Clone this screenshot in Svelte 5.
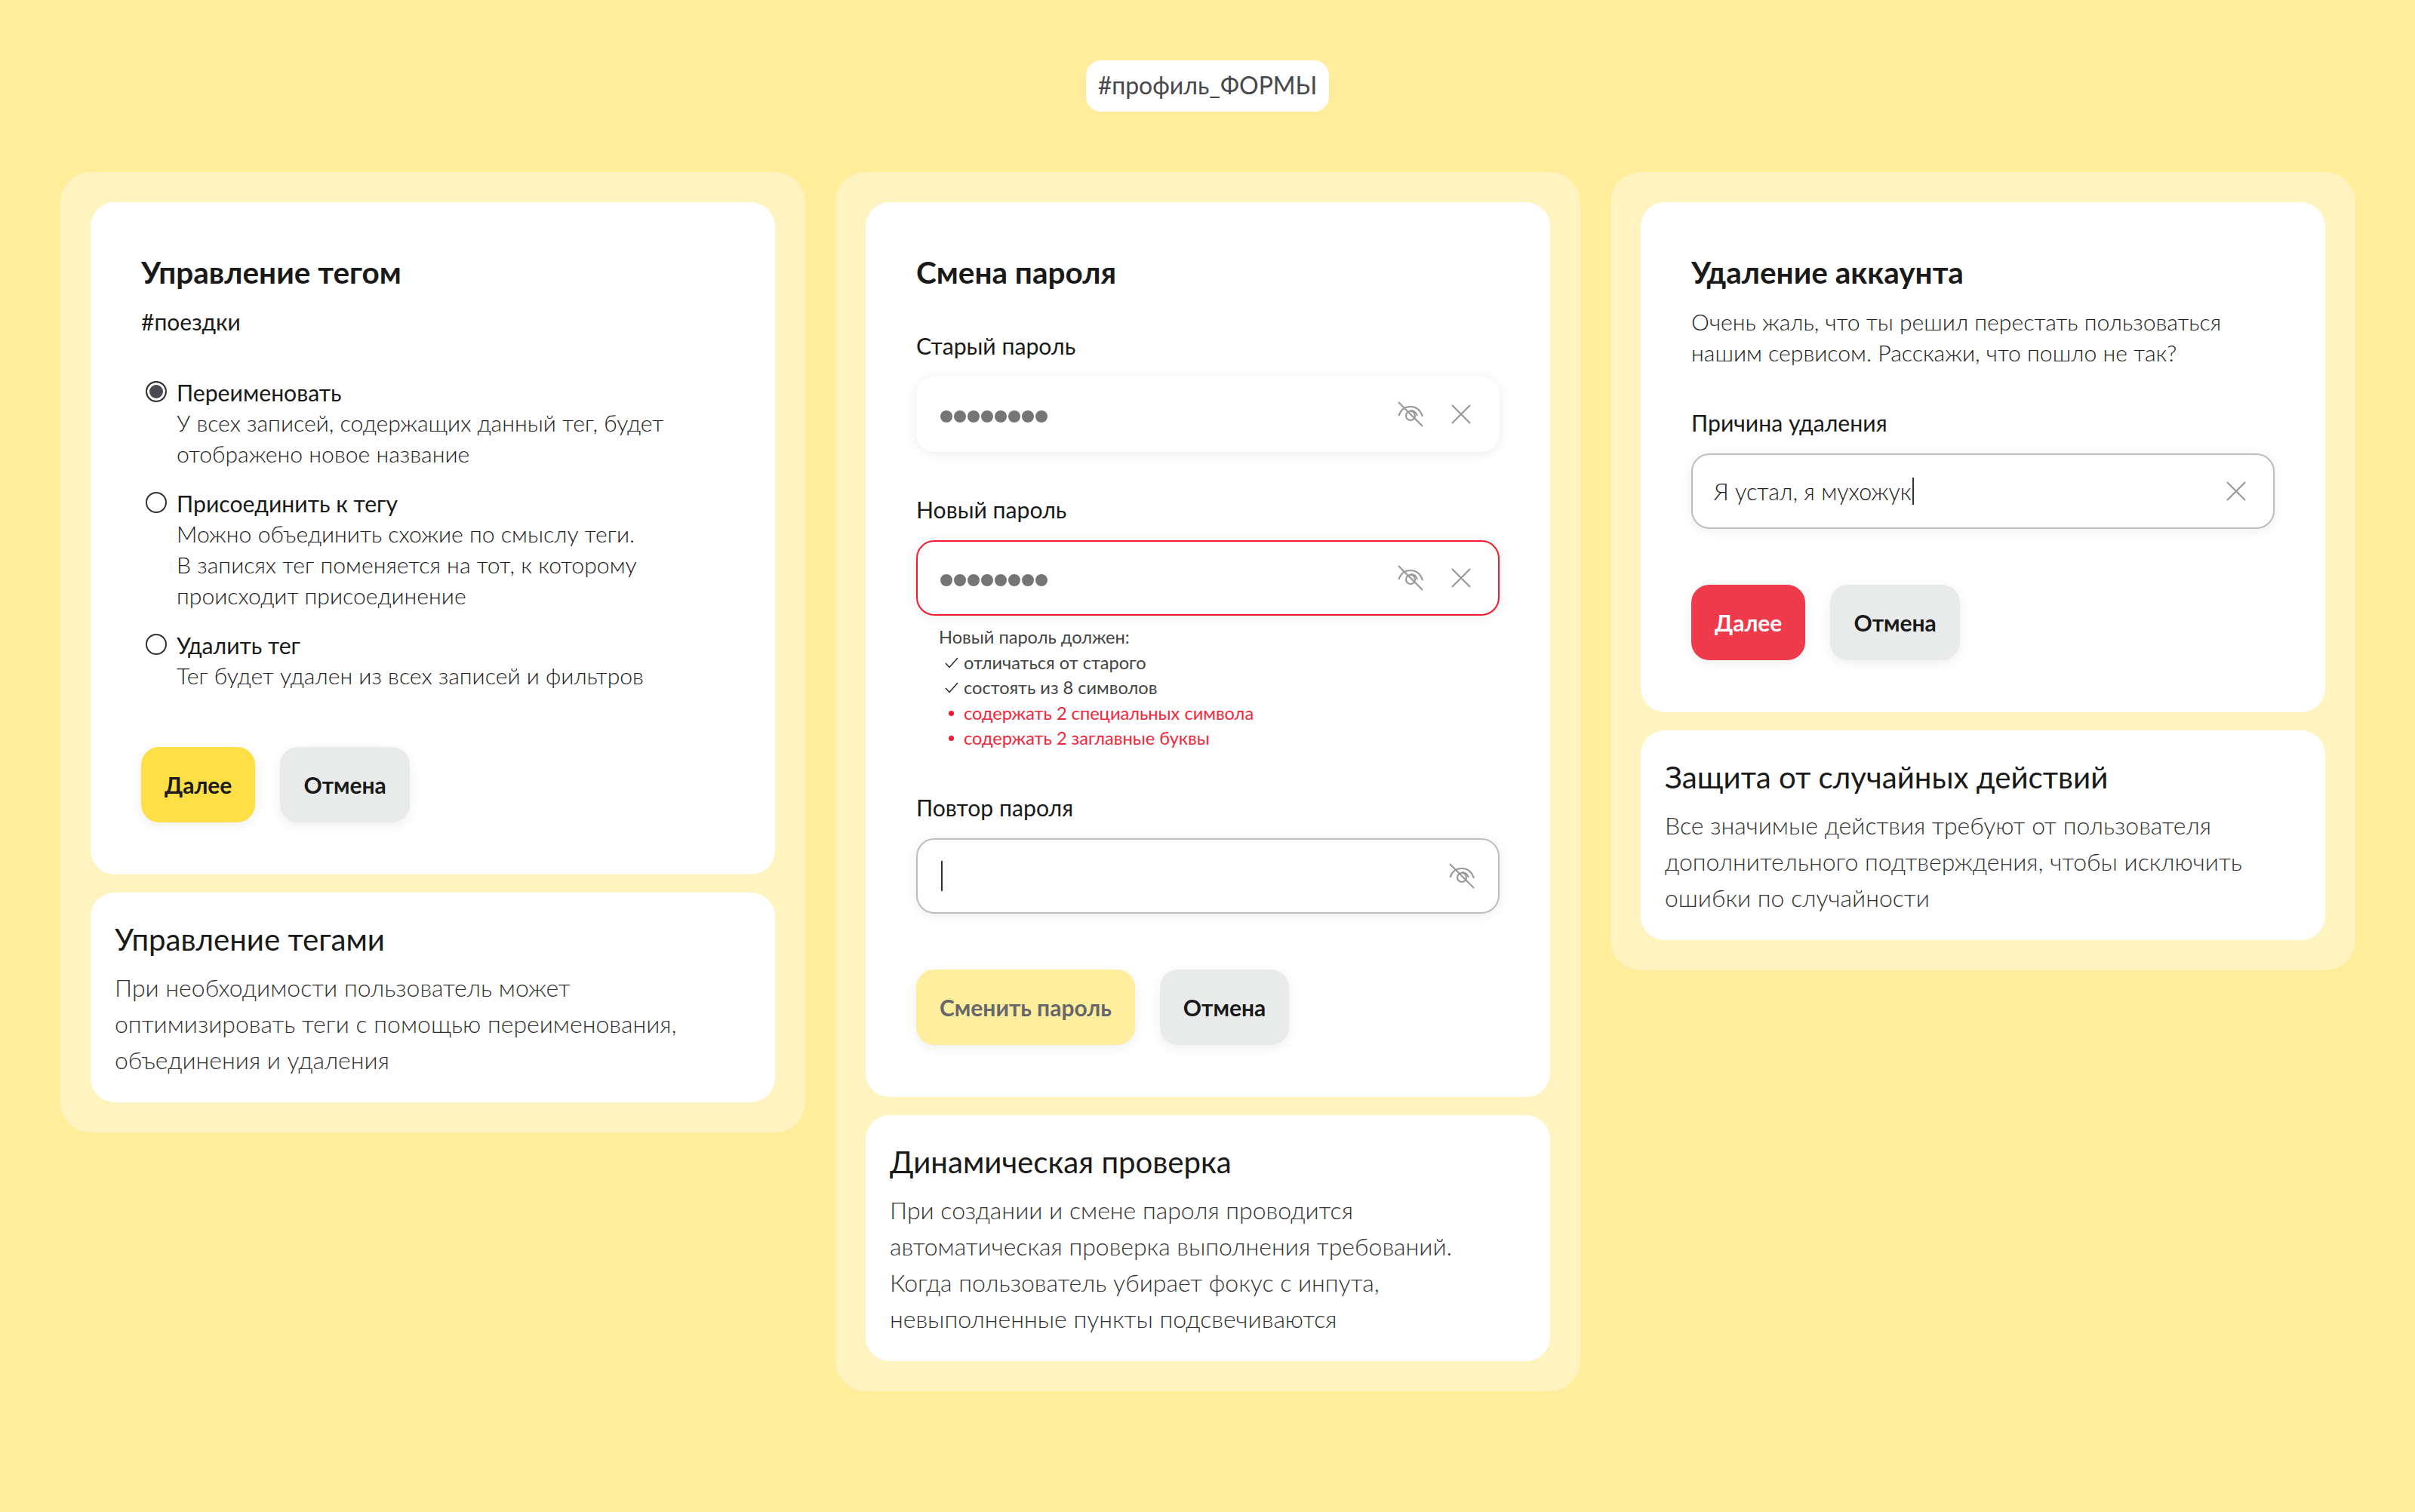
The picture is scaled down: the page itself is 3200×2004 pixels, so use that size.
<script>
  const options = [
    { title: 'Переименовать', lines: ['У всех записей, содержащих данный тег, будет', 'отображено новое название'], checked: true },
    { title: 'Присоединить к тегу', lines: ['Можно объединить схожие по смыслу теги.', 'В записях тег поменяется на тот, к которому', 'происходит присоединение'] },
    { title: 'Удалить тег', lines: ['Тег будет удален из всех записей и фильтров'] }
  ];

  const rules = [
    { text: 'отличаться от старого', ok: true },
    { text: 'состоять из 8 символов', ok: true },
    { text: 'содержать 2 специальных символа', ok: false },
    { text: 'содержать 2 заглавные буквы', ok: false }
  ];

  const dots = Array(8).fill(0);
</script>

{#snippet eye()}
  <svg class="icon" width="36" height="36" viewBox="0 0 36 36" fill="none" stroke="#999" stroke-width="2.2">
    <path d="M2 2L34 34" />
    <path d="M2.5 20C5 12 11 8 18 8C25 8 31 12 34 21" />
    <path d="M18 13C22 13 25.5 15.5 27 20" />
    <circle cx="18" cy="20" r="6" />
  </svg>
{/snippet}

{#snippet cross()}
  <svg class="icon" width="26" height="26" viewBox="0 0 26 26" fill="none" stroke="#999" stroke-width="2.2">
    <path d="M1 1L25 25M25 1L1 25" />
  </svg>
{/snippet}

{#snippet secret()}
  <div class="dots" role="img" aria-label="пароль">
    {#each dots as _}<i></i>{/each}
  </div>
{/snippet}

<main class="page">
  <div class="tag">#профиль_ФОРМЫ</div>

  <div class="columns">
    <section class="panel">
      <div class="card">
        <h2>Управление тегом</h2>
        <p class="hashtag">#поездки</p>
        <div class="options">
          {#each options as o}
            <div class="option">
              <span class="radio" class:checked={o.checked}></span>
              <div>
                <div class="option-title">{o.title}</div>
                {#each o.lines as line}<div class="muted">{line}</div>{/each}
              </div>
            </div>
          {/each}
        </div>
        <div class="actions">
          <button class="btn yellow">Далее</button>
          <button class="btn grey">Отмена</button>
        </div>
      </div>
      <div class="note">
        <h3>Управление тегами</h3>
        <p>При необходимости пользователь может<br />оптимизировать теги с помощью переименования,<br />объединения и удаления</p>
      </div>
    </section>

    <section class="panel">
      <div class="card">
        <h2>Смена пароля</h2>
        <div class="field-label first">Старый пароль</div>
        <div class="input soft">
          {@render secret()}
          <div class="icons">{@render eye()}{@render cross()}</div>
        </div>
        <div class="field-label">Новый пароль</div>
        <div class="input error">
          {@render secret()}
          <div class="icons">{@render eye()}{@render cross()}</div>
        </div>
        <div class="rules">
          <div>Новый пароль должен:</div>
          {#each rules as r}
            <div class="rule" class:bad={!r.ok}>
              <span class="mark">
                {#if r.ok}
                  <svg width="18" height="15" viewBox="0 0 18 15" fill="none" stroke="#222" stroke-width="1.4"><path d="M1 8L6 13.5L17 1" /></svg>
                {:else}
                  <i></i>
                {/if}
              </span>
              {r.text}
            </div>
          {/each}
        </div>
        <div class="field-label third">Повтор пароля</div>
        <div class="input outlined only-eye">
          <span class="caret tall"></span>
          <div class="icons">{@render eye()}</div>
        </div>
        <div class="actions">
          <button class="btn pale">Сменить пароль</button>
          <button class="btn grey">Отмена</button>
        </div>
      </div>
      <div class="note">
        <h3>Динамическая проверка</h3>
        <p>При создании и смене пароля проводится<br />автоматическая проверка выполнения требований.<br />Когда пользователь убирает фокус с инпута,<br />невыполненные пункты подсвечиваются</p>
      </div>
    </section>

    <section class="panel">
      <div class="card">
        <h2>Удаление аккаунта</h2>
        <p class="muted intro">Очень жаль, что ты решил перестать пользоваться<br />нашим сервисом. Расскажи, что пошло не так?</p>
        <div class="field-label reason">Причина удаления</div>
        <div class="input outlined">
          <span class="value">Я устал, я мухожук<span class="caret"></span></span>
          <div class="icons">{@render cross()}</div>
        </div>
        <div class="actions">
          <button class="btn red">Далее</button>
          <button class="btn grey">Отмена</button>
        </div>
      </div>
      <div class="note">
        <h3>Защита от случайных действий</h3>
        <p>Все значимые действия требуют от пользователя<br />дополнительного подтверждения, чтобы исключить<br />ошибки по случайности</p>
      </div>
    </section>
  </div>
</main>

<style>
  :global(body) {
    margin: 0;
    background: #ffed9b;
  }

  .page {
    height: 2004px;
    box-sizing: border-box;
    padding-top: 80px;
    display: flex;
    flex-direction: column;
    align-items: center;
    font-family: Lato, 'Open Sans', sans-serif;
    color: #1a1a1a;
  }

  .tag {
    height: 68px;
    box-sizing: border-box;
    padding: 0 16px 3px;
    display: flex;
    align-items: center;
    background: #fff;
    border-radius: 20px;
    font-size: 32px;
    color: #47484c;
  }

  .columns {
    margin-top: 80px;
    width: 3040px;
    display: grid;
    grid-template-columns: repeat(3, 987px);
    column-gap: 40px;
    align-items: start;
  }

  .panel {
    padding: 40px;
    background: #fff3bf;
    border-radius: 40px;
    display: flex;
    flex-direction: column;
    gap: 24px;
  }

  .card {
    background: #fff;
    border-radius: 32px;
    padding: 68px 67px 69px;
  }

  h2 {
    margin: 0;
    font-size: 40.5px;
    line-height: 50px;
    font-weight: 700;
    color: #1a1a1a;
  }

  .hashtag {
    margin: 20px 0 0;
    font-size: 30px;
    line-height: 41px;
  }

  .options {
    margin-top: 52px;
    display: flex;
    flex-direction: column;
    gap: 24px;
  }

  .option {
    display: flex;
    gap: 13px;
    padding-left: 6px;
  }

  .radio {
    flex: none;
    width: 28px;
    height: 28px;
    margin-top: 6px;
    box-sizing: border-box;
    border: 2px solid #333;
    border-radius: 50%;
    background: #fff;
  }

  .radio.checked {
    background: #4a4a50;
    box-shadow: inset 0 0 0 3px #fff;
  }

  .option-title {
    font-size: 30.2px;
    line-height: 41px;
    padding-top: 1px;
    margin-bottom: -1px;
  }

  .muted {
    font-size: 30.2px;
    line-height: 41px;
    font-weight: 300;
    color: #222;
  }

  .intro {
    margin: 20px 0 0;
  }

  .actions {
    display: flex;
    gap: 33px;
    margin-top: 74px;
  }

  .btn {
    height: 100px;
    padding: 0 31px;
    border: 0;
    border-radius: 24px;
    font-family: inherit;
    font-size: 30px;
    font-weight: 700;
    box-shadow: 0 4px 16px rgba(0, 0, 0, 0.07);
  }

  .yellow { background: #ffdf46; color: #1a1a1a; }
  .grey { background: #e9eaea; color: #1a1a1a; }
  .pale { background: #feee9e; color: #66676b; }
  .red { background: #ef3a4b; color: #fff; }

  .field-label {
    font-size: 30.2px;
    line-height: 41px;
    margin-top: 56px;
    margin-bottom: 20px;
  }

  .field-label.first { margin-top: 52px; }
  .field-label.third { margin-top: 54px; }
  .field-label.reason { margin-top: 52px; }

  .input {
    height: 100px;
    box-sizing: border-box;
    padding: 0 36px 0 30px;
    display: flex;
    align-items: center;
    justify-content: space-between;
    background: #fff;
    border-radius: 24px;
    box-shadow: 0 2px 16px rgba(0, 0, 0, 0.08);
  }

  .input.soft { padding: 0 38px 0 32px; }
  .input.error { border: 2px solid #f5192d; }
  .input.outlined { border: 2px solid #bdbdbd; }
  .input.only-eye { padding-right: 30px; }

  .dots {
    display: flex;
    gap: 2px;
    margin-top: 6px;
  }

  .dots i {
    width: 16px;
    height: 16px;
    border-radius: 50%;
    background: #757575;
  }

  .icons {
    display: flex;
    align-items: center;
    gap: 36px;
  }

  .icon { display: block; }

  .value {
    margin-left: -2px;
    font-size: 30.5px;
    font-weight: 300;
    color: #222;
    display: flex;
    align-items: center;
  }

  .caret {
    display: inline-block;
    width: 2px;
    height: 36px;
    background: #333;
    margin-left: 1px;
  }

  .caret.tall { height: 40px; }

  .rules {
    margin: 12px 0 0 30px;
    font-size: 23.6px;
    line-height: 33.5px;
    color: #444;
  }

  .rule {
    display: flex;
    align-items: center;
  }

  .rule.bad { color: #f5253a; }

  .mark {
    width: 33px;
    display: flex;
    justify-content: center;
  }

  .mark i {
    width: 7px;
    height: 7px;
    border-radius: 50%;
    background: #f5192d;
  }

  .note {
    background: #fff;
    border-radius: 32px;
    padding: 36px 32px 32px;
  }

  h3 {
    margin: 0;
    font-size: 40.2px;
    line-height: 52px;
    font-weight: 400;
  }

  .note p {
    margin: 14px 0 0;
    font-size: 32px;
    line-height: 48px;
    font-weight: 300;
    color: #333;
  }
</style>
